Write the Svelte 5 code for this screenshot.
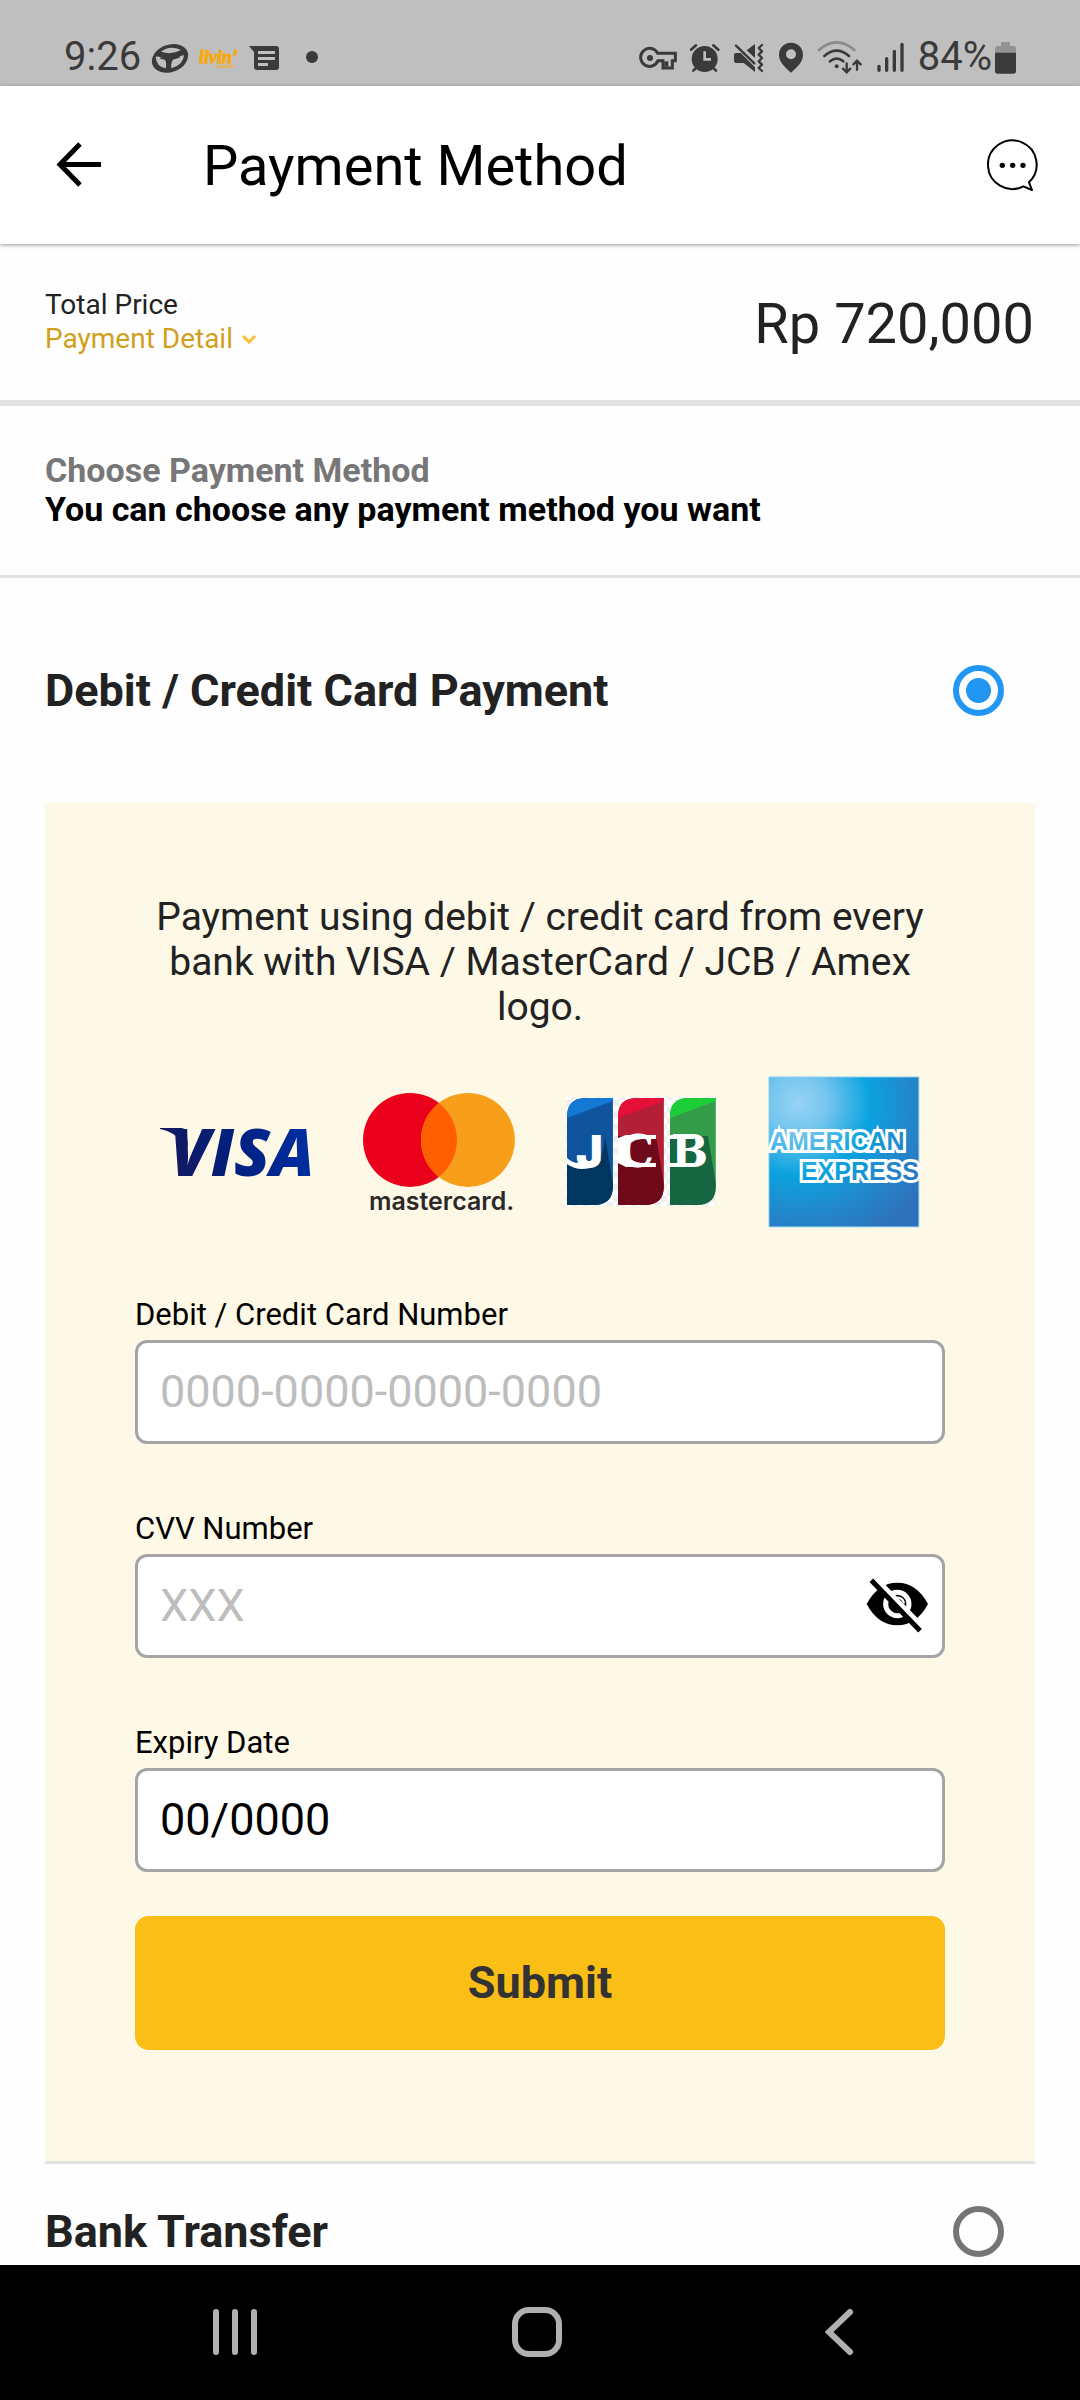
<script>
  let method = $state('card');
  let cardNumber = $state('');
  let cvv = $state('');
  let expiry = $state('00/0000');
  let cvvVisible = $state(false);
</script>

<div class="screen">
  <div class="status">
    <div class="status-left">
      <span class="clock">9:26</span>
      <svg width="38" height="35" viewBox="36 12 114 105" aria-hidden="true">
        <ellipse cx="93" cy="67" rx="56" ry="41" transform="rotate(-20 93 67)" fill="#3a3a3a" />
        <path d="M66 47Q92 26 126 42Q98 58 66 47Z M50 62Q66 60 77 70Q84 80 80 97Q52 92 50 62Z M135 57Q134 86 97 97Q95 80 103 70Q118 61 135 57Z" fill="#bfbfbf" />
        <path d="M64 66L92 72L122 62M92 72L88 92" fill="none" stroke="#3a3a3a" stroke-width="5" />
      </svg>
      <svg width="38" height="35" viewBox="0 0 38 35" aria-hidden="true">
        <text x="0" y="23" class="livin">livin’</text>
        <text x="18" y="28" class="livin-sub">mandiri</text>
      </svg>
      <svg class="message" width="31" height="35" viewBox="0 0 31 35" aria-hidden="true">
        <path d="M0 6H27Q30 6 30 9V27Q30 30 27 30H8Q5 30 5 27V12Z" fill="#3a3a3a" />
        <path d="M9 12.500H26M9 18.500H26M9 24.500H19" stroke="#bfbfbf" stroke-width="3" />
      </svg>
      <span class="dot"></span>
    </div>
    <div class="status-right">
      <svg width="38" height="35" viewBox="111 120 114 105" aria-hidden="true">
        <path d="M167 160H220V182H211V204H183V182H168A27 27 0 1 1 167 160Z" fill="none" stroke="#3a3a3a" stroke-width="9" />
        <path d="M193 184V200" stroke="#3a3a3a" stroke-width="12" />
        <circle cx="144" cy="174" r="9" fill="#3a3a3a" />
      </svg>
      <svg width="30" height="35" viewBox="267 120 90 105" aria-hidden="true">
        <circle cx="311" cy="177" r="39" fill="#3a3a3a" />
        <path d="M270 149L285 136M352 149L337 136M277 212L286 203M345 212L336 203" stroke="#3a3a3a" stroke-width="8" stroke-linecap="round" />
        <path d="M311 154V178H330" fill="none" stroke="#bfbfbf" stroke-width="8" />
      </svg>
      <svg width="32" height="35" viewBox="399 120 96 105" aria-hidden="true">
        <path d="M402 164Q402 159 408 159H422L465 202V216L431 189H408Q402 189 402 183Z M440 151L465 132V174Z" fill="#3a3a3a" />
        <path d="M408 137L463 190" stroke="#3a3a3a" stroke-width="7" stroke-linecap="round" />
        <path d="M486 135L476 144L486 154L476 164L486 174L476 184L486 194L476 204L486 213" fill="none" stroke="#3a3a3a" stroke-width="7" stroke-linecap="round" stroke-linejoin="round" />
      </svg>
      <svg width="26" height="35" viewBox="537 120 78 105" aria-hidden="true">
        <path fill-rule="evenodd" d="M576 128C555 128 540 144 540 164C540 188 561 204 576 218C591 204 612 188 612 164C612 144 597 128 576 128ZM576 148A15 15 0 1 1 576 178A15 15 0 0 1 576 148Z" fill="#3a3a3a" />
      </svg>
      <svg width="46" height="35" viewBox="657 120 138 105" aria-hidden="true">
        <g fill="none" stroke="#3a3a3a" stroke-width="8" stroke-linecap="round">
          <path d="M663 150Q716 104 769 150" stroke="#8a8a8a" />
          <path d="M679 168Q716 136 753 168M696 184Q716 168 736 184" />
          <path d="M746 190V214M735 206L746 217L757 206M777 209V183M766 193L777 182L788 193" stroke-width="7" />
        </g>
        <circle cx="716" cy="199" r="6" fill="#3a3a3a" />
      </svg>
      <svg width="29" height="35" viewBox="819 120 87 105" aria-hidden="true">
        <path d="M828 199V211M851 176V211M874 154V211M897 133V211" stroke="#3a3a3a" stroke-width="10" stroke-linecap="round" />
      </svg>
      <div class="battery">
        <span class="clock">84%</span>
        <svg width="23" height="35" viewBox="1182 120 69 105" aria-hidden="true">
          <path d="M1203 130Q1203 126 1207 126H1226Q1230 126 1230 130V138H1240Q1248 138 1248 146V162H1185V146Q1185 138 1193 138H1203Z" fill="#939393" />
          <path d="M1185 158H1248V213Q1248 221 1240 221H1193Q1185 221 1185 213Z" fill="#3a3a3a" />
        </svg>
      </div>
    </div>
  </div>

  <header class="bar">
    <button class="icon-button" aria-label="Back">
      <svg width="46" height="46" viewBox="0 0 46 46" aria-hidden="true">
        <path d="M24 2L4 22.500L24 43M4 22.500H45" fill="none" stroke="#000" stroke-width="5" />
      </svg>
    </button>
    <h1>Payment Method</h1>
    <button class="icon-button" aria-label="Chat">
      <svg width="52" height="53" viewBox="1160 420 156 159" aria-hidden="true">
        <path d="M1286 550A73 73 0 1 0 1269 562L1295 573Z" fill="none" stroke="#000" stroke-width="6" stroke-linejoin="round" />
        <circle cx="1206" cy="499" r="8" /><circle cx="1237" cy="499" r="8" /><circle cx="1268" cy="499" r="8" />
      </svg>
    </button>
  </header>

  <main>
    <section class="total">
      <div class="total-text">
        <span>Total Price</span>
        <button class="detail">
          Payment Detail
          <svg width="16" height="12" viewBox="0 0 16 12" aria-hidden="true">
            <path d="M2 3L8 9L14 3" fill="none" stroke="#fbc02d" stroke-width="3" />
          </svg>
        </button>
      </div>
      <strong class="price">Rp 720,000</strong>
    </section>

    <section class="intro">
      <h2>Choose Payment Method</h2>
      <p>You can choose any payment method you want</p>
    </section>

    <section class="methods">
      <label class="method">
        <span>Debit / Credit Card Payment</span>
        <input type="radio" name="method" value="card" bind:group={method} />
      </label>

      <form class="panel" onsubmit={(e) => e.preventDefault()}>
        <p class="note">Payment using debit / credit card from every bank with VISA / MasterCard / JCB / Amex logo.</p>

        <div class="logos">
          <svg viewBox="0 0 152 152" role="img" aria-label="Visa">
            <defs>
              <linearGradient id="visa" gradientUnits="userSpaceOnUse" x1="10" y1="90" x2="140" y2="60">
                <stop offset="0" stop-color="#14195f" /><stop offset="0.5" stop-color="#00207f" /><stop offset="1" stop-color="#002d9e" />
              </linearGradient>
            </defs>
            <path d="M0 52H21Q25 52 26 56L28 70L20 66Q17 57 0 53Z" fill="url(#visa)" />
            <text x="10" y="100" class="visa" fill="url(#visa)">VISA</text>
          </svg>
          <svg viewBox="0 0 152 152" role="img" aria-label="Mastercard">
            <circle cx="47" cy="64" r="47" fill="#ea001b" />
            <circle cx="105" cy="64" r="47" fill="#f79f1a" />
            <path d="M76 27A47 47 0 0 1 76 101A47 47 0 0 1 76 27Z" fill="#ff5f01" />
            <text x="6" y="134" class="mastercard">mastercard.</text>
          </svg>
          <svg viewBox="0 0 152 152" role="img" aria-label="JCB">
            <defs>
              <pattern id="check" width="12" height="12" patternUnits="userSpaceOnUse">
                <path d="M0 0H12V12H0Z" fill="#fff" /><path d="M0 0H6V6H0ZM6 6H12V12H6Z" fill="#efefef" />
              </pattern>
              <clipPath id="tile"><path d="M0 19Q0 0 19 0H46V88Q46 107 27 107H0Z" /></clipPath>
            </defs>
            <path d="M1 21H151V130H1Z" fill="url(#check)" />
            <g transform="translate(2 22)"><g clip-path="url(#tile)">
              <path d="M0 0H46V107H0Z" fill="#10549e" /><path d="M0 0H46V3L0 20Z" fill="#1578d2" />
              <path d="M0 67Q38 76 38 38L46 86V107H0Z" fill="#003760" />
              <path d="M0 60Q6 66 14 65L34 62Q28 71 15 71Q7 71 0 66Z" fill="#fff" />
              <text x="9" y="70" class="jcb-j">J</text>
            </g></g>
            <g transform="translate(53 22)"><g clip-path="url(#tile)">
              <path d="M0 0H46V107H0Z" fill="#b31f35" /><path d="M0 0H46V3L0 20Z" fill="#e51038" />
              <path d="M0 38H38L46 86V107H0Z" fill="#6f0a1b" />
              <path d="M0 40L8 37H38V41H24Q10 42 10 53Q10 64 24 65H38V69H8L0 65Z" fill="#fff" />
              <text x="1" y="69" class="jcb">C</text>
            </g></g>
            <g transform="translate(105 22)"><g clip-path="url(#tile)">
              <path d="M0 0H46V107H0Z" fill="#349b48" /><path d="M0 0H46V3L0 20Z" fill="#1dce38" />
              <path d="M0 38H38L46 86V107H0Z" fill="#166641" />
              <path d="M0 37H24V41H0ZM0 65H24V69H0Z" fill="#fff" />
              <text x="1" y="69" class="jcb">B</text>
            </g></g>
          </svg>
          <svg viewBox="0 0 152 152" role="img" aria-label="American Express">
            <defs>
              <radialGradient id="amex" gradientUnits="userSpaceOnUse" cx="30" cy="27" r="150">
                <stop offset="0" stop-color="#97d3f5" /><stop offset="0.2" stop-color="#74c5ee" /><stop offset="0.48" stop-color="#0aa3df" />
                <stop offset="0.75" stop-color="#2387cb" /><stop offset="1" stop-color="#2d72bb" />
              </radialGradient>
            </defs>
            <path d="M1 1H151V151H1Z" fill="url(#amex)" stroke="#8ccdf0" />
            <text x="2" y="74" class="amex" fill="url(#amex)">AMERICAN</text>
            <text x="33" y="104" class="amex" fill="url(#amex)">EXPRESS</text>
          </svg>
        </div>

        <div class="fields">
          <div class="field">
            <label for="card-number">Debit / Credit Card Number</label>
            <div class="box"><input id="card-number" type="text" placeholder="0000-0000-0000-0000" bind:value={cardNumber} /></div>
          </div>
          <div class="field">
            <label for="cvv">CVV Number</label>
            <div class="box">
              <input id="cvv" type={cvvVisible ? 'text' : 'password'} placeholder="XXX" bind:value={cvv} />
              <button type="button" class="icon-button" aria-label="Show CVV" onclick={() => (cvvVisible = !cvvVisible)}>
                <svg width="63" height="55" viewBox="78 90 189 165" aria-hidden="true">
                  <path d="M80 168Q114 104 172 104Q230 104 264 168Q230 232 172 232Q114 232 80 168Z" />
                  <circle cx="172" cy="168" r="35" fill="none" stroke="#fff" stroke-width="15" />
                  <path d="M172 148Q190 150 192 166" fill="none" stroke="#fff" stroke-width="7" />
                  <path d="M106 90L254 243" stroke="#fff" stroke-width="15" />
                  <path d="M94 97L240 248" stroke="#000" stroke-width="15" />
                </svg>
              </button>
            </div>
          </div>
          <div class="field">
            <label for="expiry">Expiry Date</label>
            <div class="box"><input id="expiry" type="text" bind:value={expiry} /></div>
          </div>
        </div>

        <button class="submit" type="submit">Submit</button>
      </form>

      <label class="method next">
        <span>Bank Transfer</span>
        <input type="radio" name="method" value="bank" bind:group={method} />
      </label>
    </section>
  </main>

  <nav>
    <button aria-label="Recent apps">
      <svg width="50" height="50" viewBox="0 0 50 50" aria-hidden="true">
        <path d="M6 5V45M25 5V45M44 5V45" stroke="#b0b0b0" stroke-width="6" stroke-linecap="round" />
      </svg>
    </button>
    <button aria-label="Home">
      <svg width="50" height="50" viewBox="0 0 50 50" aria-hidden="true">
        <rect x="3" y="3" width="44" height="44" rx="14" fill="none" stroke="#b0b0b0" stroke-width="6" />
      </svg>
    </button>
    <button aria-label="Back">
      <svg width="50" height="50" viewBox="0 0 50 50" aria-hidden="true">
        <path d="M36 5L15 25L36 45" fill="none" stroke="#b0b0b0" stroke-width="6" stroke-linecap="round" />
      </svg>
    </button>
  </nav>
</div>

<style>
  :global(body) {
    margin: 0;
    background: #fff;
  }
  .screen {
    display: flex;
    flex-direction: column;
    height: 100vh;
    font-family: Roboto, 'Liberation Sans', sans-serif;
    color: #222;
    background: #fefefe;
  }
  .screen * {
    box-sizing: border-box;
  }
  svg {
    display: block;
    flex: none;
  }
  h1, h2, p {
    margin: 0;
  }
  button {
    padding: 0;
    border: 0;
    background: none;
    font: inherit;
    color: inherit;
    cursor: pointer;
  }

  .status {
    display: flex;
    justify-content: space-between;
    align-items: center;
    padding: 34px 63px 6px 64px;
    background: #bfbfbf;
    color: #3a3a3a;
  }
  .status-left, .status-right, .battery {
    display: flex;
    align-items: center;
  }
  .status-left {
    gap: 10px;
  }
  .status-right {
    gap: 13px;
  }
  .battery {
    gap: 2px;
  }
  .clock {
    font-size: 40px;
    line-height: 46px;
  }
  .message {
    margin-left: 2px;
  }
  .dot {
    width: 12px;
    height: 12px;
    margin-left: 16px;
    border-radius: 50%;
    background: #3a3a3a;
  }
  .livin {
    font: italic 700 18px 'Liberation Serif', serif;
    fill: #f8a90c;
    stroke: #f8a90c;
  }
  .livin-sub {
    font: 700 5px Roboto, sans-serif;
    fill: #f0b030;
  }

  .bar {
    position: relative;
    display: flex;
    align-items: center;
    padding: 43px 41px 43px 56px;
    background: #fff;
    color: #000;
    box-shadow: 0 1px 4px rgb(0 0 0 / 40%);
  }
  h1 {
    flex: 1;
    padding: 3px 0 0 101px;
    font-size: 56px;
    line-height: 69px;
    font-weight: 400;
  }

  main {
    flex: 1;
    min-height: 0;
    overflow-y: auto;
    scrollbar-width: none;
  }
  .total {
    display: flex;
    justify-content: space-between;
    align-items: center;
    padding: 43px 46px 43px 45px;
    border-bottom: 6px solid #e2e2e2;
  }
  .total-text {
    font-size: 28px;
    line-height: 34px;
  }
  .total-text span {
    display: block;
  }
  .detail {
    display: flex;
    align-items: center;
    gap: 8px;
    color: #cfa01c;
  }
  .price {
    padding-top: 4px;
    font-size: 56px;
    line-height: 66px;
    font-weight: 400;
  }
  .intro {
    padding: 45px 45px 46px;
    border-bottom: 3px solid #e2e2e2;
    font-size: 34px;
    line-height: 39px;
    font-weight: 700;
    color: #000;
  }
  h2 {
    font-size: 34px;
    color: #777;
  }

  .methods {
    padding: 0 45px;
  }
  .method {
    display: flex;
    justify-content: space-between;
    align-items: center;
    padding: 86px 31px 86px 0;
    font-size: 45px;
    line-height: 53px;
    font-weight: 700;
  }
  .method.next {
    padding-top: 41px;
    padding-bottom: 41px;
  }
  .method input {
    appearance: none;
    width: 51px;
    height: 51px;
    margin: 0;
    border: 6px solid #757575;
    border-radius: 50%;
  }
  .method input:checked {
    border-color: #2196f3;
    background: radial-gradient(circle, #2196f3 12px, transparent 13px);
  }

  .panel {
    padding: 92px 90px 111px;
    border-bottom: 3px solid #e2e2e2;
    background: #fef8e6;
  }
  .note {
    font-size: 39px;
    line-height: 45px;
    text-align: center;
  }
  .logos {
    display: grid;
    grid-template-columns: repeat(4, 1fr);
    justify-items: center;
    margin-top: 46px;
  }
  .logos svg {
    width: 75%;
  }
  .visa {
    font: italic 800 66px 'Open Sans', sans-serif;
  }
  .mastercard {
    font: 600 25px Inter, sans-serif;
    fill: #2b2a29;
  }
  .jcb {
    font: 700 44px 'DejaVu Serif', serif;
    fill: #fff;
  }
  .jcb-j {
    font: 900 45px Inter, sans-serif;
    fill: #fff;
  }
  .amex {
    font: 700 25px 'Liberation Sans', sans-serif;
    stroke: #fff;
    stroke-width: 6px;
    paint-order: stroke;
  }

  .fields {
    display: grid;
    gap: 67px;
    margin: 69px 0 44px;
    color: #000;
  }
  .field {
    display: grid;
    gap: 7px;
  }
  .field label {
    font-size: 31px;
    line-height: 36px;
  }
  .box {
    display: flex;
    align-items: center;
    padding-right: 13px;
    border: 3px solid #a5a5a5;
    border-radius: 12px;
    background: #fff;
  }
  .box input {
    flex: 1;
    min-width: 0;
    height: 98px;
    padding: 0 0 0 22px;
    border: 0;
    outline: 0;
    background: none;
    font: 45px Roboto, sans-serif;
    color: #000;
  }
  .box input::placeholder {
    color: #bdbdbd;
    opacity: 1;
  }
  .submit {
    display: block;
    width: 100%;
    padding: 40px 0;
    border-radius: 14px;
    background: #fbbe16;
    font-size: 45px;
    line-height: 54px;
    font-weight: 700;
    color: #333;
  }

  nav {
    position: relative;
    display: flex;
    padding: 42px 90px 43px 84px;
    background: #000;
  }
  nav button {
    display: flex;
    flex: 1;
    justify-content: center;
  }
</style>
